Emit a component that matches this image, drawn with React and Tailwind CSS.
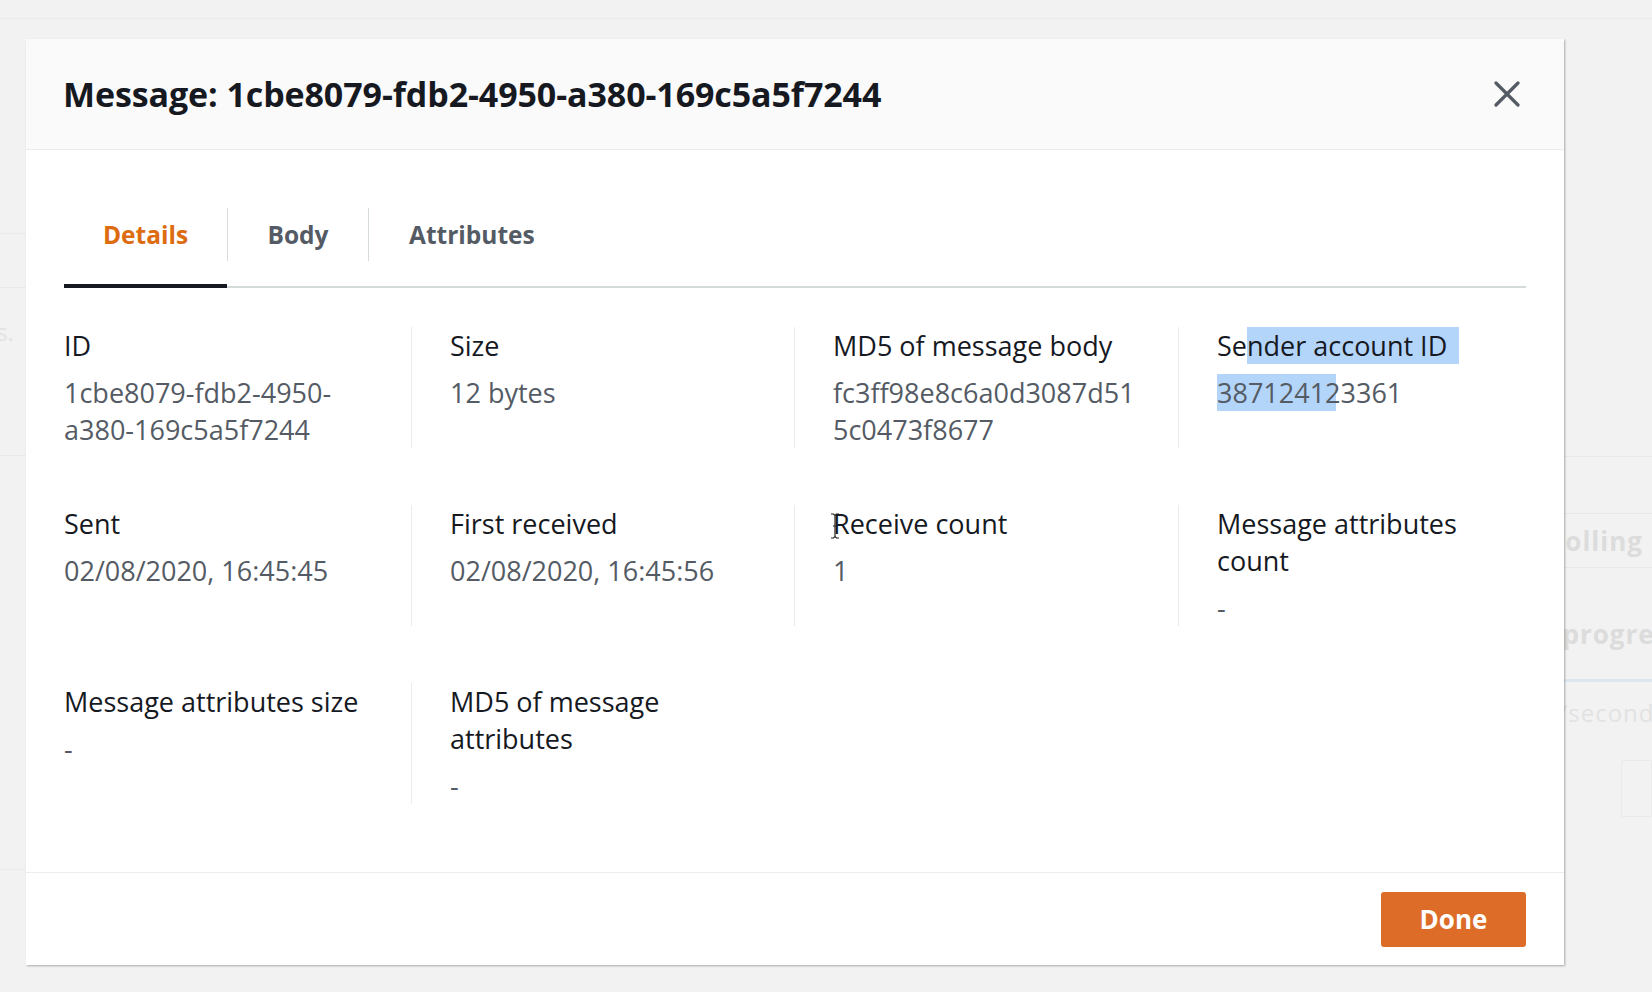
const font = "font-['Open_Sans',sans-serif]"

function Field({ label, value, first, pr = 'pr-[14px]', wrap = 'break-words' }) {
  return (
    <div className={first ? 'pr-[20px]' : `border-l border-[#eaeded] pl-[38px] ${pr}`}>
      <div className="text-[27px] leading-[37px] text-[#16191f]">{label}</div>
      <div className={`mt-[10px] text-[27px] leading-[37px] text-[#545b64] ${wrap}`}>{value}</div>
    </div>
  )
}

export default function App() {
  return (
    <div className={`relative h-[992px] w-[1652px] overflow-hidden bg-[#f2f2f2] ${font}`}>
      {/* faded page behind the modal */}
      <div className="h-[19px] border-b border-[#ebebeb]" />
      <div className="flex">
        <div className="w-[1393px] text-[24px] text-[#e3e3e3]">
          <div className="h-[215px] border-b border-[#eaeaea]" />
          <div className="h-[54px] border-b border-[#eaeaea]" />
          <div className="h-[168px] overflow-hidden border-b border-[#eaeaea] pt-[26px]">
            <div className="-ml-[90px] whitespace-nowrap">requests.</div>
          </div>
          <div className="h-[414px] border-b border-[#eaeaea]" />
        </div>
        <div className="flex-1 overflow-hidden whitespace-nowrap">
          <div className="h-[438px] border-b border-[#e8e8e8]" />
          <div className="h-[57px] border-b border-[#e8e8e8]" />
          <div className="h-[54px] border-b border-[#e8e8e8] pl-[155px] text-[26px] font-bold leading-[54px] tracking-[1px] text-[#dcdcdc]">
            Polling
          </div>
          <div className="h-[111px] pl-[134px] pt-[46px] text-[26px] font-bold leading-[40px] tracking-[1px] text-[#dcdcdc]">
            In progress
          </div>
          <div className="h-[3px] bg-[#dfe7ee]" />
          <div className="pl-[114px] pt-[14px] text-[24px] leading-[34px] tracking-[1px] text-[#e2e2e2]">0.00/second</div>
          <div className="ml-[228px] mt-[30px] h-[57px] rounded-[2px] border border-[#eaeaea]" />
        </div>
      </div>

      {/* modal */}
      <div className="absolute left-[26px] top-[39px] flex h-[926px] w-[1538px] flex-col bg-white shadow-[1px_1px_2px_rgba(0,0,0,0.3)]">
        <div className="flex h-[111px] shrink-0 items-center justify-between border-b border-[#eaeded] bg-[#fafafa] pl-[37px] pr-[44px]">
          <h2 className="text-[34px] font-bold tracking-[-0.1px] text-[#16191f]">
            Message: 1cbe8079-fdb2-4950-a380-169c5a5f7244
          </h2>
          <svg width="26" height="26" viewBox="0 0 26 26" className="text-[#545b64]">
            <path d="M2 2L24 24M24 2L2 24" stroke="currentColor" strokeWidth="3.2" strokeLinecap="round" />
          </svg>
        </div>

        <div className="flex-1 px-[38px] pt-[45px]">
          <div className="flex items-start border-b-2 border-[#d5dbdb]">
            <div className="-mb-[2px] w-[163px] border-b-4 border-[#16191f] pt-[20px] pb-[29px] text-center text-[24.5px] font-bold leading-[40px] text-[#dd6b10]">
              Details
            </div>
            <span className="mt-[13px] h-[53px] w-px bg-[#d5dbdb]" />
            <div className="w-[140px] pt-[20px] pb-[31px] text-center text-[24.5px] font-bold leading-[40px] text-[#545b64]">
              Body
            </div>
            <span className="mt-[13px] h-[53px] w-px bg-[#d5dbdb]" />
            <div className="px-[40px] pt-[20px] pb-[31px] text-[24.5px] font-bold leading-[40px] text-[#545b64]">
              Attributes
            </div>
          </div>

          <div className="mt-[39px] grid grid-cols-[347px_383px_384px_1fr] gap-y-[57px]">
            <Field first label="ID" value="1cbe8079-fdb2-4950-a380-169c5a5f7244" />
            <Field label="Size" value="12 bytes" />
            <Field label="MD5 of message body" value="fc3ff98e8c6a0d3087d515c0473f8677" pr="pr-[30px]" wrap="break-all" />
            <div className="border-l border-[#eaeded] pl-[38px]">
              <div className="text-[27px] leading-[37px] text-[#16191f]">
                Se<span className="bg-[#b4d5fa] pr-[12px]">nder account ID</span>
              </div>
              <div className="mt-[10px] text-[27px] leading-[37px] text-[#545b64]">
                <span className="bg-[#b4d5fa]">3871241</span>
                <span className="bg-[linear-gradient(to_right,#b4d5fa_70%,transparent_70%)]">2</span>3361
              </div>
            </div>

            <Field first label="Sent" value="02/08/2020, 16:45:45" />
            <Field label="First received" value="02/08/2020, 16:45:56" />
            <div className="border-l border-[#eaeded] pl-[38px] pr-[14px]">
              <div className="relative text-[27px] leading-[37px] text-[#16191f]">
                <svg width="10" height="26" viewBox="0 0 10 26" className="absolute -left-[3px] top-[8px]">
                  <path d="M1 1h2.5L5 2.5 6.5 1H9M5 2.5v21M1 25h2.5L5 23.5 6.5 25H9M3 13h4" fill="none" stroke="#222" strokeWidth="1.2" />
                </svg>
                Receive count
              </div>
              <div className="mt-[10px] text-[27px] leading-[37px] text-[#545b64]">1</div>
            </div>
            <Field label="Message attributes count" value="-" />

            <Field first label="Message attributes size" value="-" />
            <Field label="MD5 of message attributes" value="-" />
          </div>
        </div>

        <div className="flex h-[93px] shrink-0 items-center justify-end border-t border-[#eaeded] pr-[38px]">
          <button className="h-[55px] w-[145px] rounded-[3px] bg-[#dc6c27] text-[26px] font-bold text-white">
            Done
          </button>
        </div>
      </div>
    </div>
  )
}
